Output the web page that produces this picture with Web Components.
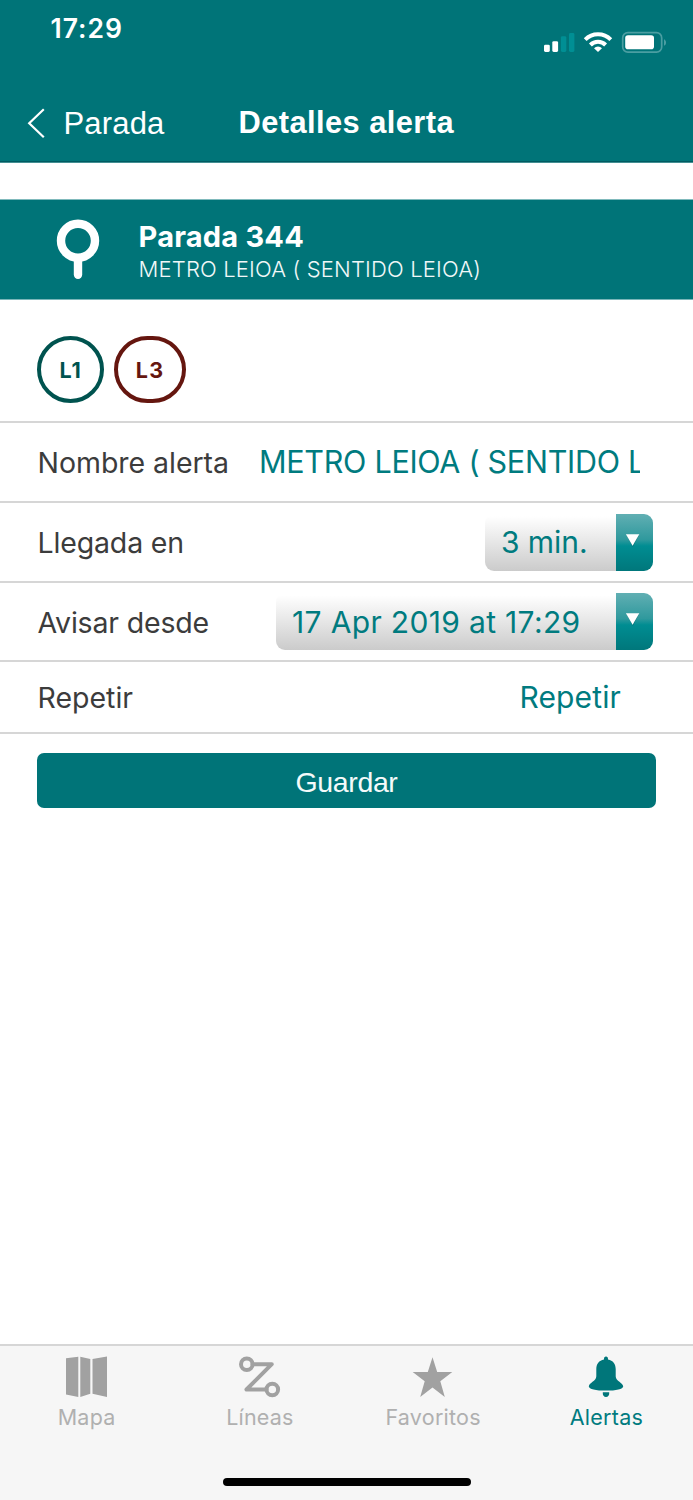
<!DOCTYPE html>
<html lang="es">
<head>
<meta charset="utf-8">
<title>Detalles alerta</title>
<style>
html,body{margin:0;padding:0}
body{background:#fff;font-family:Inter,"Liberation Sans",sans-serif}
</style>
</head>
<body>
<alert-app></alert-app>
<script>
const define = (name, html, setup) => {
  const t = document.createElement('template');
  t.innerHTML = html;
  customElements.define(name, class extends HTMLElement {
    constructor(){
      super();
      this.attachShadow({mode:'open'}).append(t.content.cloneNode(true));
    }
    connectedCallback(){ if(setup) setup.call(this, this.shadowRoot); }
  });
};

/* One line of text; "w" is its advance width, spread through letter spacing. */
define('ui-text', `<style>
:host{display:block;white-space:pre;flex:none;line-height:40px;height:40px}
:host([face=sans]) span{font-family:"Liberation Sans",Arial,sans-serif}
span{display:inline-block}
</style><span><slot></slot></span>`, function(root){
  const s = root.querySelector('span');
  s.style.fontSize = this.getAttribute('size') + 'px';
  s.style.fontWeight = this.getAttribute('weight') || 400;
  const w = +this.getAttribute('w');
  const n = this.textContent.length;
  if(w && n){
    s.style.letterSpacing = '0px';
    s.style.letterSpacing = ((w - s.getBoundingClientRect().width) / n).toFixed(3) + 'px';
    this.style.width = w + 'px';
  }
});

define('status-bar', `<style>
:host{display:flex;height:84px;justify-content:space-between;align-items:flex-start;padding:0 27px 0 50.5px;color:#fff}
ui-text{margin-top:8px}
svg{margin-top:30px}
</style>
<ui-text size="26.5" weight="600" w="72.5">17:29</ui-text>
<svg width="123" height="24" viewBox="543 30 123 24">
 <g fill="#fff"><rect x="544" y="44.7" width="5.8" height="7.3" rx="1.4"/><rect x="552.3" y="41.2" width="5.8" height="10.8" rx="1.4"/></g>
 <g fill="#008f94"><rect x="560.9" y="36.2" width="5.4" height="15.8" rx="1.4"/><rect x="569" y="33" width="5.4" height="19" rx="1.4"/></g>
 <g fill="none" stroke="#fff" stroke-width="4"><path d="M585.2 39.6a18.2 18.2 0 0 1 25.6 0"/><path d="M590.4 45a10.7 10.7 0 0 1 15.2 0"/></g>
 <path fill="#fff" d="M594 48.2a5.8 5.8 0 0 1 8 0l-4 3.9z"/>
 <rect x="622.7" y="32.7" width="39" height="19.4" rx="5.2" fill="none" stroke="#4b9ea2" stroke-width="1.7"/>
 <rect x="625.2" y="35.2" width="28.8" height="14" rx="2.8" fill="#fff"/>
 <path d="M664 39.2c2.7 1.2 2.7 5.4 0 6.600z" fill="#4b9ea2"/>
</svg>`);

define('nav-bar', `<style>
:host{display:grid;grid-template-columns:238.5px auto;height:77px;color:#fff}
.back{display:flex;padding-left:27px}
svg{margin-top:23px;margin-right:17.5px;flex:none}
.back ::slotted(ui-text){margin-top:20px}
::slotted(ui-text){margin-top:19px}
</style>
<div class="back"><svg width="19" height="32" viewBox="0 0 19 32"><path d="M16.8 2.3 2.2 16.2 16.8 30.3" fill="none" stroke="#fff" stroke-width="2.2"/></svg>
<slot name="back"></slot></div><slot></slot>`);

define('stop-banner', `<style>
:host{display:flex;box-sizing:border-box;height:101px;background:#007478;border-top:1px solid #80babc;border-bottom:1px solid #7ab6b9;color:#fff;padding-left:56px}
svg{margin-top:19px;margin-right:37px}
.t{padding-top:17px;margin-left:1.5px}
.s{margin-top:-8px;margin-left:1.5px;color:#f0f8f8}
</style>
<svg width="44" height="62" viewBox="0 0 44 62"><circle cx="22" cy="21.8" r="17" fill="none" stroke="#fff" stroke-width="8.4"/><path d="M22 41v14.7" stroke="#fff" stroke-width="8.4" stroke-linecap="round"/></svg>
<div><ui-text class="t" size="29" weight="700" w="165.5">Parada 344</ui-text><ui-text class="s" size="22" weight="350" w="342.5">METRO LEIOA ( SENTIDO LEIOA)</ui-text></div>`);

define('line-badge', `<style>
:host{display:flex;box-sizing:border-box;width:var(--w);height:67px;border:4px solid var(--c);border-radius:35px;color:var(--c);align-items:center;justify-content:center}
</style><slot></slot>`);

define('form-row', `<style>
:host{display:flex;box-sizing:border-box;height:var(--h,80px);border-bottom:2px solid #d6d6d6;align-items:center;justify-content:space-between;padding:0 40px 0 37.5px;color:#3c3c3c;background:#fff}
::slotted(.label){margin-top:2px}
::slotted([slot=value]){color:#007b7f}
</style><slot></slot><slot name="value"></slot>`);

define('drop-select', `<style>
:host{display:flex;height:57px;border-radius:9px;overflow:hidden;width:var(--w);box-sizing:border-box}
.v{flex:1;padding-left:16px;display:flex;align-items:center;background:linear-gradient(#fff 4%,#cbcbcb)}
::slotted(ui-text){margin-top:0}
.a{width:37px;background:linear-gradient(#61afb3,#2f999d 45%,#008d92 56%,#00777b);display:flex;justify-content:center}
svg{margin-top:19px;margin-right:4px}
</style><div class="v"><slot></slot></div>
<div class="a"><svg width="15" height="15" viewBox="0 0 15 15"><path d="M1.8 2.5h12L7.8 14z" fill="#00595c" opacity=".5"/><path d="M.9 1.3h13.400L7.600 12.800z" fill="#fff"/></svg></div>`);

define('primary-button', `<style>
:host{display:flex;justify-content:center;align-items:center;height:55px;margin:19px 37px 0;border-radius:7px;background:#007478;color:#f4fafa}
::slotted(ui-text){margin-top:3px}
</style><slot></slot>`);

define('tab-item', `<style>
:host{display:flex;flex-direction:column;align-items:center;flex:1;color:#a1a1a1}
.l{color:#b0b0b0}
:host([active]) .l{color:#007b7f}
::slotted(svg){display:block;margin-top:9px}
</style><slot name="icon"></slot><div class="l"><slot></slot></div>`);

define('tab-bar', `<style>
:host{display:block;box-sizing:border-box;height:156px;border-top:2px solid #d6d6d6;background:#f6f6f6}
nav{display:flex;height:131px}
.home{width:248px;height:8px;border-radius:4px;background:#000;margin:1px auto 0}
ui-text{height:36px;line-height:36px}
</style><nav>
<tab-item><svg slot="icon" width="44" height="44" viewBox="0.5 0 44 44" fill="#a1a1a1"><path d="M1.500 3.200 13.800 1.800V42L1.500 39.400zM15.800 1.800 25.800 3.900V38.700L15.800 42.100zM28 3.900 42.500 1.600V42L28 38.700z"/></svg><ui-text size="21.5" w="58">Mapa</ui-text></tab-item>
<tab-item><svg slot="icon" width="44" height="44" viewBox="0.500 0 44 44" fill="none" stroke="#a1a1a1" stroke-width="4"><circle cx="9.3" cy="9.2" r="5.8"/><circle cx="34.8" cy="34.5" r="5.8"/><path d="M15 9.2H34.3L9 34.5H29" stroke-linecap="round" stroke-linejoin="round"/></svg><ui-text size="21.5" w="67.5">Líneas</ui-text></tab-item>
<tab-item><svg slot="icon" width="44" height="44" viewBox="0.5 0 44 44" fill="#a1a1a1"><path d="M22 2.2 26.700 17.100H41.800L29.800 26.300 34.300 42 22 32.500 9.700 42 14.200 26.300 2.200 17.100H17.300z"/></svg><ui-text size="21.5" w="95.5">Favoritos</ui-text></tab-item>
<tab-item active><svg slot="icon" width="44" height="44" viewBox="0 0 44 44" fill="#00767a"><path d="M22 1.500c-1.400 0-2.100.8-2 3C15 5.400 12.300 9 12.300 14v7.200c0 5-7.500 6.500-7.500 10.200C4.800 33.800 12 35.600 22 35.600S39.200 33.800 39.200 31.400c0-3.700-7.500-5.200-7.500-10.200V14C31.700 9 29 5.400 24 4.500c.1-2.200-.6-3-2-3zM18.800 37.200h6.400c.4 3-1.200 4.800-3.200 4.800s-3.600-1.800-3.200-4.800z"/></svg><ui-text size="21.5" w="73.5">Alertas</ui-text></tab-item>
</nav><div class="home"></div>`);

define('alert-app', `<style>
:host{display:flex;flex-direction:column;width:693px;height:1500px;background:#fff;overflow:hidden}
header{background:#007478;height:161px;border-bottom:1px solid #005b61;box-shadow:0 1px #438f93;margin-bottom:37px}
.badges{display:flex;gap:10px;box-sizing:border-box;height:123px;padding:36px 37px 0;border-bottom:2px solid #d6d6d6}
.clip{width:381px;overflow:hidden;margin-right:13px;margin-top:-1px}
main{flex:1}
.rep{margin-right:32px}
</style>
<header><status-bar></status-bar><nav-bar><ui-text slot="back" face="sans" size="31" w="101">Parada</ui-text><ui-text face="sans" size="30.8" weight="700" w="215.5">Detalles alerta</ui-text></nav-bar></header>
<main>
<stop-banner></stop-banner>
<div class="badges">
<line-badge style="--w:67px;--c:#00534f"><ui-text size="21.500" weight="700" w="22">L1</ui-text></line-badge>
<line-badge style="--w:72px;--c:#65160f"><ui-text size="21.500" weight="700" w="28.5">L3</ui-text></line-badge>
</div>
<form-row><ui-text class="label" size="28.5" w="191.5">Nombre alerta</ui-text><div slot="value" class="clip"><ui-text size="30.500" w="386">METRO LEIOA ( SENTIDO L</ui-text></div></form-row>
<form-row><ui-text class="label" size="28.5" w="146.5">Llegada en</ui-text><drop-select slot="value" style="--w:168px"><ui-text size="30" w="86.5">3 min.</ui-text></drop-select></form-row>
<form-row style="--h:79px"><ui-text class="label" size="28.5" w="171.5">Avisar desde</ui-text><drop-select slot="value" style="--w:377px"><ui-text size="30" w="288.5">17 Apr 2019 at 17:29</ui-text></drop-select></form-row>
<form-row style="--h:72px"><ui-text class="label" size="28.5" w="95.5">Repetir</ui-text><ui-text slot="value" class="rep" size="30" w="101.5">Repetir</ui-text></form-row>
<primary-button><ui-text face="sans" size="28.5" w="102">Guardar</ui-text></primary-button>
</main>
<tab-bar></tab-bar>`);
</script>
</body>
</html>
